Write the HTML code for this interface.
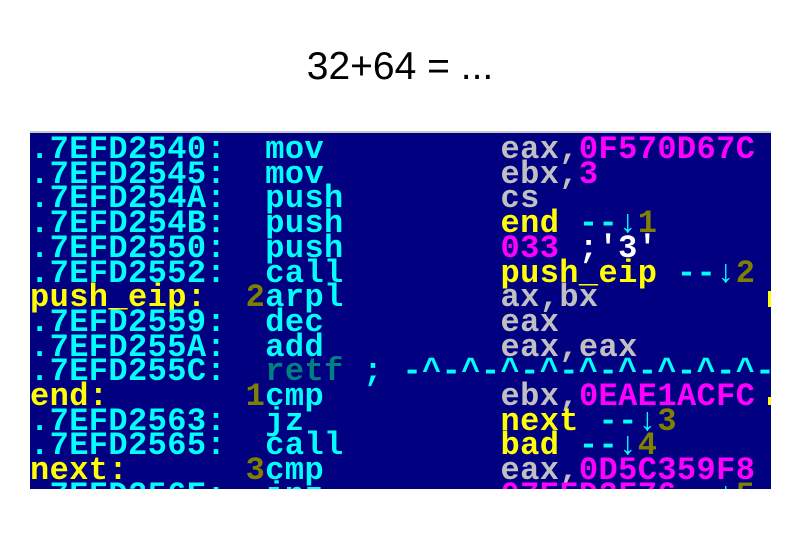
<!DOCTYPE html><html><head><style>
body{margin:0;width:800px;height:533px;background:#fff;overflow:hidden;position:relative}
.t{position:absolute;top:45px;left:0;width:800px;text-align:center;font:39px "Liberation Sans",sans-serif;color:#000}
.p{position:absolute;left:30px;top:131px;width:741px;height:358px;background:#000080;border-top:2px solid #c8c8c8;overflow:hidden;box-sizing:border-box}
pre{margin:0;position:absolute;left:0;top:5px;font:bold 32px/24.7px "Liberation Mono",monospace;letter-spacing:0.4px;color:#0ff;white-space:pre}
.y{color:#ff0}.g{color:#c0c0c0}.m{color:#f0f}.o{color:#808000}.w{color:#fff}.d{color:#008080}
.bar{position:absolute;left:738px;top:158px;width:4px;height:16px;background:#ff0}
.bar2{top:264px;height:8px}
</style></head><body>
<div class="t">32+64 = ...</div>
<div class="p"><pre>.7EFD2540:  mov         <span class="g">eax,</span><span class="m">0F570D67C</span>
.7EFD2545:  mov         <span class="g">ebx,</span><span class="m">3</span>
.7EFD254A:  push        <span class="g">cs</span>
.7EFD254B:  push        <span class="y">end</span> --↓<span class="o">1</span>
.7EFD2550:  push        <span class="m">033</span> <span class="w">;'3'</span>
.7EFD2552:  call        <span class="y">push_eip</span> --↓<span class="o">2</span>
<span class="y">push_eip:</span>  <span class="o">2</span>arpl        <span class="g">ax,bx</span>
.7EFD2559:  dec         <span class="g">eax</span>
.7EFD255A:  add         <span class="g">eax,eax</span>
.7EFD255C:  <span class="d">retf</span> ; -^-^-^-^-^-^-^-^-^-^-
<span class="y">end:</span>       <span class="o">1</span>cmp         <span class="g">ebx,</span><span class="m">0EAE1ACFC</span>
.7EFD2563:  jz          <span class="y">next</span> --↓<span class="o">3</span>
.7EFD2565:  call        <span class="y">bad</span> --↓<span class="o">4</span>
<span class="y">next:</span>      <span class="o">3</span>cmp         <span class="g">eax,</span><span class="m">0D5C359F8</span>
.7EFD256E:  jnz         <span class="m">07EFD2F76</span>  ↓<span class="o">5</span></pre>
<div class="bar"></div><div class="bar bar2"></div></div>
</body></html>
